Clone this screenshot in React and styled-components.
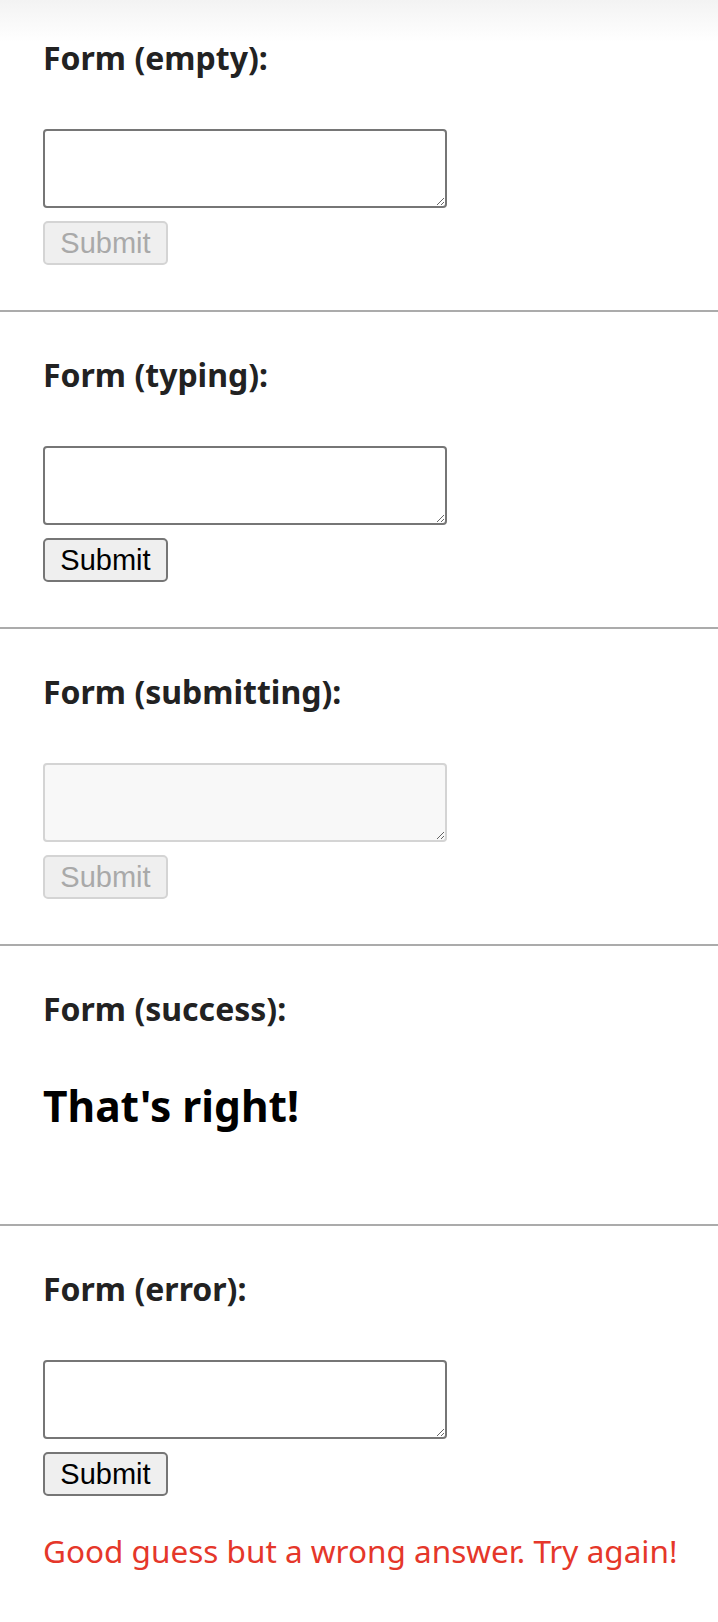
import styled, { createGlobalStyle } from "styled-components";

const GlobalStyle = createGlobalStyle`
  html, body {
    margin: 0;
    padding: 0;
    background: #fff;
  }
`;

const states = [
  { key: "empty", label: "Form (empty):", disabled: true },
  { key: "typing", label: "Form (typing):" },
  { key: "submitting", label: "Form (submitting):", disabled: true, busy: true },
  { key: "success", label: "Form (success):", done: true },
  { key: "error", label: "Form (error):", error: "Good guess but a wrong answer. Try again!" },
];

const App = () => {
  return (
    <Page>
      <GlobalStyle />
      {states.map((s, i) => (
        <Section key={s.key} $first={i === 0} $last={i === states.length - 1}>
          <Title>{s.label}</Title>
          {s.done ? (
            <Success>That's right!</Success>
          ) : (
            <Form onSubmit={(e) => e.preventDefault()}>
              <Answer disabled={s.busy} />
              <SubmitButton disabled={s.disabled}>Submit</SubmitButton>
              {s.error && <ErrorText>{s.error}</ErrorText>}
            </Form>
          )}
        </Section>
      ))}
    </Page>
  );
};

export default App;

const Page = styled.div`
  min-height: 1622px;
  background: linear-gradient(to bottom, #f3f3f3 0, #ffffff 42px);
  font-family: "Noto Sans", "Noto Sans CJK KR", sans-serif;
`;

const Section = styled.section`
  padding: ${(p) => (p.$first ? "36px" : "41px")} 43px ${(p) => (p.$last ? "50px" : "45px")};
  border-bottom: ${(p) => (p.$last ? "none" : "2px solid #ababab")};
`;

const Title = styled.h2`
  margin: 0;
  font-size: 32px;
  font-weight: 700;
  line-height: normal;
  color: #222;
`;

const Form = styled.form`
  display: flex;
  flex-direction: column;
  align-items: flex-start;
  margin-top: 50px;
`;

const Answer = styled.textarea`
  box-sizing: border-box;
  width: 404px;
  height: 79px;
  margin: 0;
  border: 2px solid ${(p) => (p.disabled ? "#d4d4d4" : "#767676")};
  border-radius: 4px;
  background: ${(p) => (p.disabled ? "#f8f8f8" : "#fff")};
  font-family: "Liberation Mono", monospace;
  font-size: 16px;
`;

const SubmitButton = styled.button`
  box-sizing: border-box;
  height: 44px;
  width: 125px;
  margin-top: 13px;
  padding: 0;
  font-family: "Liberation Sans", Arial, sans-serif;
  font-size: 29px;
  color: ${(p) => (p.disabled ? "#a9a9a9" : "#000")};
  background: #efefef;
  border: 2px solid ${(p) => (p.disabled ? "#d4d4d4" : "#767676")};
  border-radius: 5px;
`;

const ErrorText = styled.p`
  margin: 33px 0 0;
  font-size: 31.5px;
  line-height: normal;
  color: #e5372a;
  white-space: nowrap;
`;

const Success = styled.h1`
  margin: 47px 0 45px;
  font-size: 42.5px;
  font-weight: 700;
  line-height: normal;
  color: #000;
`;
